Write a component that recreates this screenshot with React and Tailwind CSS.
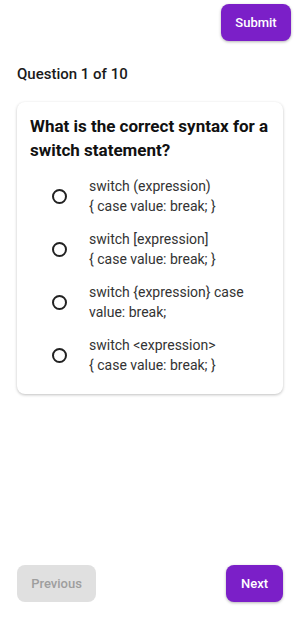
export default function App() {
  const options = [
    ["switch (expression)", "{ case value: break; }"],
    ["switch [expression]", "{ case value: break; }"],
    ["switch {expression} case", "value: break;"],
    ["switch <expression>", "{ case value: break; }"],
  ];
  return (
    <div className="h-[637px] w-[300px] bg-white flex flex-col text-[#1a1a1a]" style={{ fontFamily: "Roboto, 'Noto Sans', sans-serif" }}>
      <div className="flex justify-end pt-[4px] pr-[9px]">
        <button className="w-[70px] h-[37px] rounded-[8px] bg-[#7b1fc8] text-white text-[13px] font-medium shadow-[0_1px_3px_rgba(0,0,0,0.3)]">Submit</button>
      </div>
      <div className="px-[17px] mt-[23px] text-[15px] font-medium leading-[20px]">Question 1 of 10</div>
      <div className="mx-[17px] mt-[18px] rounded-[8px] bg-white shadow-[0_1px_3px_rgba(0,0,0,0.25)] pt-[12px] pb-[19px] pl-[13px] pr-[8px]">
        <div className="text-[17px] font-bold leading-[24px] text-[#111]">What is the correct syntax for a switch statement?</div>
        <div className="mt-[14px] flex flex-col gap-[13px]">
          {options.map((o, i) => (
            <div key={i} className="flex items-center">
              <div className="ml-[22px] w-[15px] h-[15px] rounded-full border-[2px] border-[#222]" />
              <div className="ml-[22px] text-[14px] leading-[20px] text-[#333]">
                <div>{o[0]}</div>
                <div>{o[1]}</div>
              </div>
            </div>
          ))}
        </div>
      </div>
      <div className="flex-1" />
      <div className="flex justify-between px-[17px] mb-[35px]">
        <button className="w-[79px] h-[37px] rounded-[8px] bg-[#e0e0e0] text-[#9e9e9e] text-[13px] font-medium">Previous</button>
        <button className="w-[57px] h-[37px] rounded-[8px] bg-[#7b1fc8] text-white text-[13px] font-medium shadow-[0_1px_3px_rgba(0,0,0,0.3)]">Next</button>
      </div>
    </div>
  );
}
